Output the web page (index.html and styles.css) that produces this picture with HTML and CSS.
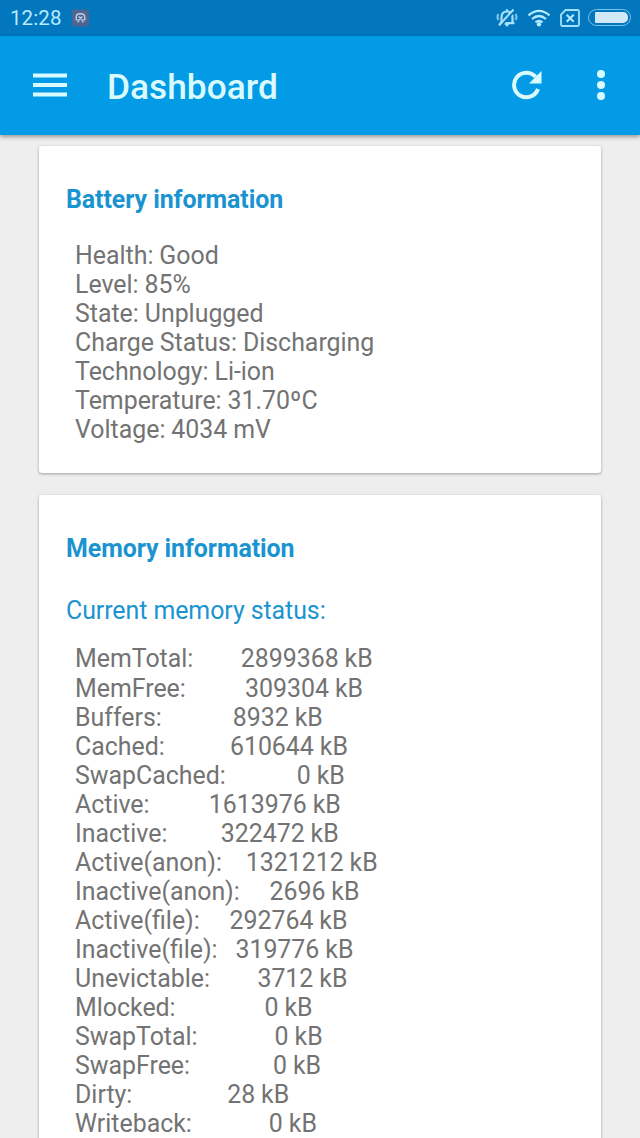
FILE: index.html
```html
<!DOCTYPE html>
<html lang="en">
<head>
  <meta charset="UTF-8">
  <meta name="viewport" content="width=device-width, initial-scale=1.0">
  <title>Dashboard</title>
  <link rel="stylesheet" href="styles.css">
</head>
<body>
  <div class="status-bar">
    <span class="clock">12:28</span>
    <svg class="app-icon" width="17" height="18" viewBox="0 0 18 18">
      <rect width="18" height="18" rx="2" fill="#4f6591"/>
      <path d="M6 11H4.500V7.500Q4.500 4.500 9 4.500t4.500 3V11H12M7 7.500l4 3.500M11 7.500L7 11M6 13.500l1.500-2M12 13.500l-1.500-2" fill="none" stroke="#c3d3e6" stroke-width="1.400"/>
    </svg>
    <div class="status-icons">
      <svg width="22" height="20" viewBox="0 0 22 20">
        <path d="M3.500 15.200h15M5.500 15V9.500Q5.500 3.500 11 3.500t5.500 6V15M11 3.500V1.200" fill="none" stroke="#a9e0fb" stroke-width="2.200"/>
        <path d="M8.500 16h5l-2.500 3z" fill="#a9e0fb"/>
        <path d="M2.500 6Q.500 9 2.500 12M19.500 6q2 3 0 6" fill="none" stroke="#79c2ea" stroke-width="2.200"/>
        <path d="M4.700 18L18.700 2.500" stroke="#0277bd" stroke-width="2.500"/>
        <path d="M3 17.500L17.500 1.500" stroke="#a9e0fb" stroke-width="2"/>
      </svg>
      <svg width="24" height="18" viewBox="0 0 24 18">
        <path d="M1.500 6.300q10.500-9 21 0M5 10q7-6 14 0M8.500 13.300q3.500-3 7 0" fill="none" stroke="#b5ebff" stroke-width="2.200"/>
        <circle cx="12" cy="15.300" r="2.200" fill="#b5ebff"/>
      </svg>
      <svg width="20" height="18" viewBox="0 0 20 18">
        <path d="M5.500 1H17.500Q19 1 19 2.500V15.500Q19 17 17.500 17H2.500Q1 17 1 15.500V5.500z" fill="none" stroke="#a3e0fb" stroke-width="1.800"/>
        <path d="M6.700 5.700l7 7M13.700 5.700l-7 7" stroke="#b5ebff" stroke-width="2"/>
      </svg>
      <span class="battery"><span class="battery-level"></span></span>
    </div>
  </div>

  <header class="toolbar">
    <svg width="34" height="24" viewBox="0 0 34 24">
      <path d="M0 2.500h34M0 12h34M0 21.500h34" stroke="#d9fbff" stroke-width="3.800"/>
    </svg>
    <h1>Dashboard</h1>
    <svg class="refresh" width="30" height="30" viewBox="0 0 30 30">
      <path d="M23.600 6.800A12.300 12.300 0 1 0 26 19" fill="none" stroke="#d9fbff" stroke-width="4"/>
      <path d="M29.500 1V13.500H17z" fill="#d9fbff"/>
    </svg>
    <svg class="more" width="8" height="30" viewBox="0 0 8 30">
      <g fill="#d9fbff">
        <circle cx="4" cy="4" r="4"/>
        <circle cx="4" cy="15" r="4"/>
        <circle cx="4" cy="26" r="4"/>
      </g>
    </svg>
  </header>

  <main>
    <section class="card">
      <h2>Battery information</h2>
      <pre class="info">Health: Good
Level: 85%
State: Unplugged
Charge Status: Discharging
Technology: Li-ion
Temperature: 31.70ºC
Voltage: 4034 mV</pre>
    </section>

    <section class="card">
      <h2>Memory information</h2>
      <h3>Current memory status:</h3>
      <pre class="info">MemTotal:        2899368 kB
MemFree:          309304 kB
Buffers:            8932 kB
Cached:           610644 kB
SwapCached:            0 kB
Active:          1613976 kB
Inactive:         322472 kB
Active(anon):    1321212 kB
Inactive(anon):     2696 kB
Active(file):     292764 kB
Inactive(file):   319776 kB
Unevictable:        3712 kB
Mlocked:               0 kB
SwapTotal:             0 kB
SwapFree:              0 kB
Dirty:                28 kB
Writeback:             0 kB</pre>
    </section>
  </main>
</body>
</html>
```

FILE: styles.css
```css
* {
  box-sizing: border-box;
}
body {
  margin: 0;
  height: 1138px;
  overflow: hidden;
  display: flex;
  flex-direction: column;
  background-color: #eeeeee;
  font-family: Roboto, sans-serif;
}
.status-bar {
  flex: none;
  display: flex;
  align-items: center;
  height: 36px;
  padding: 0 9px 1px 10px;
  background-color: #0277bd;
}
.clock {
  width: 62px;
  padding-top: 1px;
  color: #b5ebff;
  font-size: 20.5px;
  letter-spacing: 0.1px;
}
.status-icons {
  display: flex;
  align-items: center;
  gap: 9px;
  margin-left: auto;
}
.battery {
  width: 43px;
  height: 17px;
  margin-left: -1px;
  padding: 2px 2px 2px 6px;
  border: 1px solid #79c2ea;
  border-radius: 9px;
}
.battery-level {
  display: block;
  height: 11px;
  border-radius: 1px 5px 5px 1px;
  background-color: #d0e8f7;
}
.toolbar {
  flex: none;
  position: relative;
  display: flex;
  align-items: center;
  height: 99px;
  padding: 0 35px 2px 33px;
  background-color: #039be5;
  box-shadow: 0 2px 4px rgba(0, 0, 0, 0.35);
}
h1 {
  margin: 4px 0 0 40px;
  color: #d9fbff;
  font-size: 35.3px;
  font-weight: 500;
}
.refresh {
  margin-left: auto;
}
.more {
  margin-left: 55px;
}
main {
  padding: 11px 39px 0;
}
.card {
  margin-bottom: 22px;
  padding: 39px 27px 29px;
  border-radius: 3px;
  background-color: #fff;
  box-shadow: 0 1px 3px rgba(0, 0, 0, 0.35);
}
h2, h3 {
  margin: 0;
  color: #1a94d0;
  font-size: 24.9px;
  line-height: 30px;
  letter-spacing: -0.05px;
}
h3 {
  margin-top: 32px;
  font-weight: 400;
}
.info {
  margin: 0;
  padding: 18px 0 0 9px;
  color: #737373;
  font-family: Roboto, sans-serif;
  font-size: 24.9px;
  line-height: 29.06px;
  word-spacing: -0.25px;
}
h2 + .info {
  padding-top: 26px;
}
```
